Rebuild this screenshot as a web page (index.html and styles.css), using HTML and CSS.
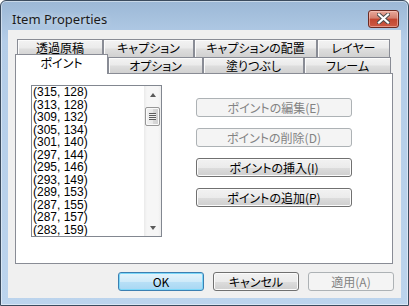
FILE: index.html
```html
<!DOCTYPE html>
<html lang="ja">
<head>
    <meta charset="UTF-8">
    <title>Item Properties</title>
    <link rel="stylesheet" href="styles.css">
</head>
<body>
    <div class="window">
        <!-- Barra de título -->
        <div class="titlebar">
            <span class="title">Item Properties</span>
            <button class="close-button">
                <svg width="13" height="11" viewBox="0 0 13 11">
                    <path d="M2 1.5 L11 9.5 M11 1.5 L2 9.5" stroke="#4a4a4a" stroke-width="4" stroke-linecap="square"/>
                    <path d="M2 1.5 L11 9.5 M11 1.5 L2 9.5" stroke="#ffffff" stroke-width="2.2" stroke-linecap="square"/>
                </svg>
            </button>
        </div>

        <div class="client">
            <!-- Abas -->
            <div class="tabs">
                <div class="tab-row back">
                    <div class="tab tab-genko">透過原稿</div>
                    <div class="tab tab-caption">キャプション</div>
                    <div class="tab tab-haichi">キャプションの配置</div>
                    <div class="tab tab-layer">レイヤー</div>
                </div>
                <div class="tab-row front">
                    <div class="tab selected">ポイント</div>
                    <div class="tab tab-option">オプション</div>
                    <div class="tab tab-fill">塗りつぶし</div>
                    <div class="tab tab-frame">フレーム</div>
                </div>
            </div>

            <div class="panel">
                <div class="listbox">
                    <div class="items">
                        <div>(315, 128)</div>
                        <div>(313, 128)</div>
                        <div>(309, 132)</div>
                        <div>(305, 134)</div>
                        <div>(301, 140)</div>
                        <div>(297, 144)</div>
                        <div>(295, 146)</div>
                        <div>(293, 149)</div>
                        <div>(289, 153)</div>
                        <div>(287, 155)</div>
                        <div>(287, 157)</div>
                        <div>(283, 159)</div>
                        <div>(279, 159)</div>
                    </div>
                    <div class="scrollbar">
                        <div class="arrow-box"><span class="arrow up"></span></div>
                        <div class="track">
                            <div class="thumb"><span class="grip"></span></div>
                        </div>
                        <div class="arrow-box"><span class="arrow down"></span></div>
                    </div>
                </div>

                <div class="actions">
                    <button class="btn wide" disabled>ポイントの編集(E)</button>
                    <button class="btn wide" disabled>ポイントの削除(D)</button>
                    <button class="btn wide">ポイントの挿入(I)</button>
                    <button class="btn wide">ポイントの追加(P)</button>
                </div>
            </div>

            <!-- Botões do rodapé -->
            <div class="footer">
                <button class="btn small default">OK</button>
                <button class="btn small">キャンセル</button>
                <button class="btn small" disabled>適用(A)</button>
            </div>
        </div>
    </div>
</body>
</html>
```

FILE: styles.css
```css
body {
    margin: 0;
    width: 409px;
    height: 306px;
    overflow: hidden;
    background-color: #ffffff;
    font-family: "Noto Sans CJK JP", sans-serif;
    font-feature-settings: "palt";
}

/* Janela */
.window {
    box-sizing: border-box;
    width: 409px;
    height: 306px;
    border: 1px solid #3b4b5e;
    border-radius: 6px 6px 0 0;
    background: linear-gradient(#9cb8d6, #b4cde8 40px, #bcd4ed);
    padding: 0 7px 7px 7px;
    display: flex;
    flex-direction: column;
    box-shadow: inset 0 0 0 1px rgba(255, 255, 255, 0.45);
}

.titlebar {
    height: 29px;
    box-sizing: border-box;
    padding-top: 6px;
    display: flex;
    align-items: center;
    justify-content: space-between;
}

.title {
    padding-left: 4px;
    font-family: "Noto Sans", sans-serif;
    font-size: 13px;
    color: #1b1b1b;
    text-shadow: 0 0 6px rgba(255, 255, 255, 0.7);
}

.close-button {
    width: 31px;
    height: 18px;
    margin-right: 2px;
    padding: 0;
    border: 1px solid #6b2a22;
    border-radius: 3px;
    background: linear-gradient(#e9a99b, #d47f6e 45%, #c2452f 50%, #cd5a45);
    box-shadow: inset 0 0 0 1px rgba(255, 210, 200, 0.5);
    display: flex;
    align-items: center;
    justify-content: center;
}

.client {
    flex: 1;
    background-color: #f0f0f0;
    display: flex;
    flex-direction: column;
}

/* Abas */
.tabs {
    padding: 9px 0 0 9px;
}

.tab-row {
    display: flex;
}

.tab {
    box-sizing: border-box;
    border: 1px solid #898c95;
    border-bottom: none;
    background: linear-gradient(#f3f3f3, #ebebeb 45%, #dddddd 55%, #d1d1d1);
    box-shadow: inset 1px 1px 0 #fbfbfb;
    font-size: 12px;
    line-height: 1;
    color: #000;
    display: flex;
    align-items: center;
    justify-content: center;
    white-space: nowrap;
}

.back .tab {
    height: 18px;
    padding-bottom: 2px;
}

.front {
    height: 16px;
}

.front .tab {
    height: 16px;
}

.tab-genko { width: 86px; }
.tab-caption { width: 91px; }
.tab-haichi { width: 123px; }
.tab-layer { width: 73px; }
.tab-option { width: 95px; }
.tab-fill { width: 101px; }
.tab-frame { width: 87px; }

.front .tab.selected {
    position: relative;
    z-index: 1;
    width: 93px;
    height: 20px;
    margin-top: -3px;
    margin-left: -2px;
    padding-bottom: 3px;
    background: #ffffff;
    box-shadow: none;
}

/* Painel */
.panel {
    box-sizing: border-box;
    width: 378px;
    height: 191px;
    margin-left: 7px;
    border: 1px solid #898c95;
    background-color: #ffffff;
    padding: 11px 0 0 15px;
    display: flex;
    gap: 34px;
}

.listbox {
    box-sizing: border-box;
    width: 131px;
    height: 152px;
    border: 1px solid #828790;
    display: flex;
}

.items {
    flex: 1;
    overflow: hidden;
    padding-left: 1px;
    font-family: "Liberation Sans", Arial, sans-serif;
    font-size: 12px;
    line-height: 12.5px;
    color: #000;
}

.scrollbar {
    width: 17px;
    display: flex;
    flex-direction: column;
    background: linear-gradient(90deg, #eaeaea, #f6f6f6 3px, #f6f6f6 14px, #ededed);
}

.arrow-box {
    height: 17px;
    display: flex;
    align-items: center;
    justify-content: center;
}

.arrow {
    width: 0;
    height: 0;
    border-left: 3.5px solid transparent;
    border-right: 3.5px solid transparent;
}

.arrow.up {
    border-bottom: 4px solid #5a5a5a;
}

.arrow.down {
    border-top: 4px solid #5a5a5a;
}

.track {
    flex: 1;
    padding: 4px 1px 0 1px;
}

.thumb {
    box-sizing: border-box;
    height: 19px;
    border: 1px solid #979797;
    border-radius: 2px;
    background: linear-gradient(90deg, #f1f1f1, #e9e9e9 50%, #d9d9d9 50%, #d0d0d0);
    box-shadow: inset 0 0 0 1px #fafafa;
    display: flex;
    align-items: center;
    justify-content: center;
}

.grip {
    width: 7px;
    height: 7px;
    background: repeating-linear-gradient(#5d5d5d 0, #5d5d5d 1px, #eeeeee 1px, #eeeeee 2px);
}

/* Botões */
.actions {
    margin-top: 13px;
    display: flex;
    flex-direction: column;
    gap: 11px;
}

.btn {
    box-sizing: border-box;
    height: 19px;
    padding: 0;
    border: 1px solid #707070;
    border-radius: 3px;
    background: linear-gradient(#f2f2f2, #ebebeb 50%, #dddddd 50%, #cfcfcf);
    box-shadow: inset 0 0 0 1px #fbfbfb;
    font-family: "Noto Sans CJK JP", sans-serif;
    font-feature-settings: "palt";
    font-size: 12px;
    line-height: 1;
    color: #000;
}

.btn:disabled {
    border-color: #adb2b5;
    background: #f4f4f4;
    box-shadow: none;
    color: #838383;
}

.wide {
    width: 156px;
}

.small {
    width: 86px;
}

.btn.default {
    border-color: #3c7fb1;
    background: linear-gradient(#e5f4fc, #cfeaf9 50%, #b9e0f7 50%, #a8d7f3);
    box-shadow: inset 0 0 0 1px #7bd7f9;
}

.footer {
    margin-top: 8px;
    padding-right: 7px;
    display: flex;
    justify-content: flex-end;
    gap: 9px;
}
```
